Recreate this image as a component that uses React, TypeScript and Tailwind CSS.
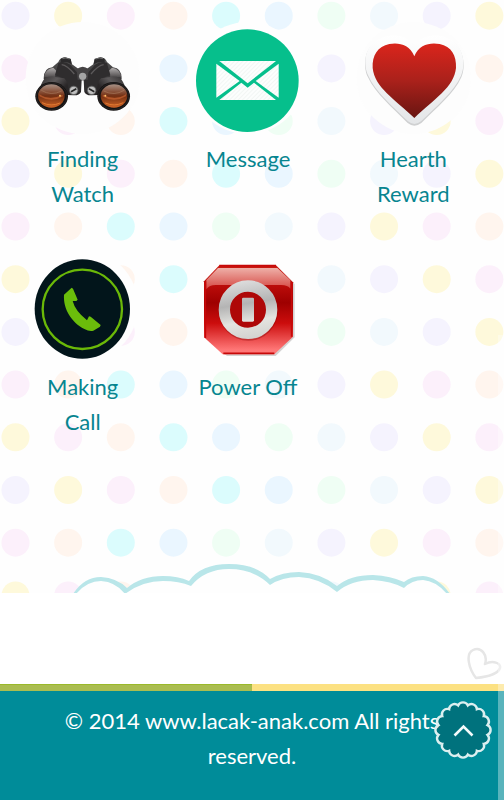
import React from "react";

const dotColors = ["#f5f3fe", "#fef9db", "#fcf0fb", "#fff5ee", "#dbfcfd", "#eaf6ff", "#effef4", "#f2f9fd"];
const rowStarts = [0, 2, 1];

function DotPattern() {
  const dots: React.ReactElement[] = [];
  for (let row = 0; row < 24; row++) {
    for (let col = 0; col < 40; col++) {
      dots.push(
        <circle
          key={`${row}-${col}`}
          cx={15.5 + col * 52.65}
          cy={15.7 + row * 52.7}
          r={14}
          fill={dotColors[(rowStarts[row % 3] + col) % 8]}
        />
      );
    }
  }
  return (
    <svg className="absolute inset-0 h-full w-full" aria-hidden="true">
      {dots}
    </svg>
  );
}

function Barrel() {
  return (
    <g>
      <path d="M132 236 Q132 204 158 202 L176 186 Q181 173 196 172 L213 176 L217 193 L236 206 L262 206 L262 240 L246 241 L244 276 Q238 287 222 286 L200 285 L150 262 Z" fill="url(#body)" />
      <path d="M133 232 Q136 206 161 203 L170 212 L166 232 Z" fill="url(#side)" />
      <path d="M176 190 Q192 181 212 194 L238 224 L244 246 L243 271 Q234 285 212 284 L204 252 L180 230 L166 226 Z" fill="#2f2d2e" />
      <path d="M186 194 Q202 196 224 222" fill="none" stroke="#5c595a" strokeWidth="4" />
      <path d="M183 177 Q196 168 213 178 L216 193 Q200 183 183 188 Z" fill="#2b2a2b" />
      <path d="M188 176 Q198 172 210 177" stroke="#8c8c8c" strokeWidth="2" fill="none" />
      <path d="M128 246 Q136 228 162 230 L194 235 Q207 248 206 275 L193 315 L170 328 L112 280 Z" fill="url(#barrel)" />
      <ellipse cx="156" cy="289" rx="49" ry="43" fill="#151313" />
      <ellipse cx="156" cy="289" rx="46" ry="40" fill="none" stroke="#4a4442" strokeWidth="1" />
      <ellipse cx="155" cy="288" rx="40" ry="35" fill="url(#lens)" />
      <path d="M119 283 Q151 304 188 284 L190 289 Q156 310 119 289 Z" fill="#d9703a" opacity=".55" />
      <path d="M125 271 Q154 289 186 273" fill="none" stroke="#a8785c" strokeWidth="2" />
      <path d="M127 308 Q155 321 181 309" fill="none" stroke="#e07a32" strokeWidth="3" />
      <circle cx="181" cy="287" r="3" fill="#ffc36b" />
      <circle cx="222" cy="271" r="14" fill="#666" />
      <circle cx="222" cy="271" r="11" fill="#c0c0c0" />
      <path d="M214 275 L230 266" stroke="#242424" strokeWidth="5" />
    </g>
  );
}

function Binoculars() {
  return (
    <svg viewBox="78 66 342 336" className="h-28 w-full" aria-hidden="true">
      <defs>
        <linearGradient id="body" x1="0" y1="0" x2="0" y2="1">
          <stop offset="0" stopColor="#555" />
          <stop offset=".5" stopColor="#3b393a" />
          <stop offset="1" stopColor="#252223" />
        </linearGradient>
        <linearGradient id="side" x1="0" y1="0" x2="0" y2="1">
          <stop offset="0" stopColor="#b4b0b0" />
          <stop offset="1" stopColor="#4d4a4b" />
        </linearGradient>
        <linearGradient id="barrel" x1="0" y1="0" x2="1" y2="1">
          <stop offset="0" stopColor="#2a2728" />
          <stop offset=".35" stopColor="#5d5a5b" />
          <stop offset=".6" stopColor="#2a2728" />
          <stop offset="1" stopColor="#1f1d1e" />
        </linearGradient>
        <linearGradient id="lens" x1="0" y1="0" x2="0" y2="1">
          <stop offset="0" stopColor="#a69085" />
          <stop offset=".32" stopColor="#885038" />
          <stop offset=".5" stopColor="#722f13" />
          <stop offset="1" stopColor="#d06425" />
        </linearGradient>
      </defs>
      <ellipse cx="249" cy="234" rx="171" ry="168" fill="#fdfdfd" />
      <Barrel />
      <g transform="translate(498 0) scale(-1 1)">
        <Barrel />
      </g>
      <path d="M231 208 Q249 193 267 208 L264 239 L234 239 Z" fill="#454344" />
      <circle cx="249" cy="229" r="11" fill="#a5a5a5" />
    </svg>
  );
}

function Envelope() {
  return (
    <svg viewBox="69 66 342 336" className="h-28 w-full" aria-hidden="true">
      <defs>
        <pattern id="stripes" width="9" height="9" patternUnits="userSpaceOnUse" patternTransform="rotate(45)">
          <rect width="9" height="9" fill="#fcfefd" />
          <rect width="2" height="9" fill="#edf3f0" />
        </pattern>
      </defs>
      <ellipse cx="240" cy="234" rx="171" ry="168" fill="#fefefe" />
      <circle cx="239" cy="242" r="154" fill="#06bf8c" />
      <g fill="url(#stripes)">
        <path d="M155 183 H325 L240 250 Z" />
        <path d="M146 191 L216 243 L146 293 Z" />
        <path d="M333 191 L264 243 L333 293 Z" />
        <path d="M155 300 L221 248 L240 263 L259 248 L325 300 Z" />
      </g>
    </svg>
  );
}

function HeartBadge() {
  return (
    <svg viewBox="60 66 342 336" className="h-28 w-full" aria-hidden="true">
      <defs>
        <linearGradient id="red" x1="0" y1="0" x2="0" y2="1">
          <stop offset="0" stopColor="#da251c" />
          <stop offset=".5" stopColor="#aa211b" />
          <stop offset="1" stopColor="#681511" />
        </linearGradient>
        <linearGradient id="rim" x1="0" y1="0" x2="0" y2="1">
          <stop offset="0" stopColor="#fff" />
          <stop offset="1" stopColor="#e4e6e8" />
        </linearGradient>
      </defs>
      <ellipse cx="231" cy="234" rx="171" ry="168" fill="#fdfdfd" />
      <path d="M233 137 C205 104 157 101 117 125 C83 147 78 198 94 232 C116 280 167 323 213 369 Q233 385 254 369 C300 323 353 280 374 232 C389 198 380 146 348 125 C308 101 262 104 233 137 Z" fill="#cfd0d1" />
      <path d="M233 134 C205 101 157 98 117 122 C84 143 79 193 95 227 C116 275 167 318 214 364 Q233 380 253 364 C300 318 352 275 373 227 C388 193 380 143 348 122 C308 98 262 101 233 134 Z" fill="url(#rim)" />
      <path d="M233 169 C219 133 186 127 158 132 C123 139 106 167 108 204 C114 263 174 297 233 354 C292 297 352 263 358 204 C360 167 344 139 309 132 C280 127 247 133 233 169 Z" fill="url(#red)" />
    </svg>
  );
}

function PhoneBadge() {
  return (
    <svg viewBox="78 90 342 336" className="h-28 w-full" aria-hidden="true">
      <ellipse cx="249" cy="258" rx="166" ry="168" fill="#fefefe" />
      <ellipse cx="248" cy="267" rx="143" ry="149" fill="#02151b" />
      <circle cx="248" cy="268" r="119" fill="none" stroke="#6bb908" strokeWidth="7" />
      <path d="M193 224 L216 203 L220 206 L234 239 L230 243 L219 243 Q226 272 262 301 L268 289 L273 290 L303 315 L301 320 L281 332 Q269 335 254 327 C216 307 190 267 193 224 Z" fill="#6bbd0b" />
    </svg>
  );
}

function PowerBadge() {
  return (
    <svg viewBox="69 90 342 336" className="h-28 w-full" aria-hidden="true">
      <defs>
        <linearGradient id="glass" x1="0" y1="0" x2="0" y2="1">
          <stop offset="0" stopColor="#c91a12" />
          <stop offset=".24" stopColor="#b90b09" />
          <stop offset=".42" stopColor="#9e0000" />
          <stop offset=".65" stopColor="#cc0d0d" />
          <stop offset=".95" stopColor="#ff7777" />
        </linearGradient>
        <linearGradient id="shine" x1="0" y1="0" x2="0" y2="1">
          <stop offset="0" stopColor="#eeb0a8" />
          <stop offset="1" stopColor="#d54742" />
        </linearGradient>
        <linearGradient id="metal" gradientUnits="userSpaceOnUse" x1="220" y1="180" x2="250" y2="358">
          <stop offset="0" stopColor="#dedede" />
          <stop offset=".4" stopColor="#b4b4b4" />
          <stop offset=".7" stopColor="#e4e4e0" />
          <stop offset="1" stopColor="#d2d2cf" />
        </linearGradient>
      </defs>
      <ellipse cx="240" cy="258" rx="171" ry="168" fill="#fefefe" />
      <path d="M157 140 H327 L381 192 V352 L324 408 H178 L145 382 Z" fill="#d4d2d2" />
      <path d="M155 136 H325 L376 187 V350 L320 403 H165 L109 352 V184 Z" fill="url(#glass)" />
      <path d="M151 144 H329 L368 180 V206 Q361 195 340 195 H145 Q124 195 116 208 V180 Z" fill="url(#shine)" />
      <path d="M113 354 V184 M155 137 H325 M372 187 V350 M167 400 H320" fill="none" stroke="#c70808" strokeWidth="5" />
      <circle cx="242" cy="273" r="89" fill="#850000" opacity=".35" />
      <circle cx="241" cy="269" r="71" fill="#ae0808" stroke="url(#metal)" strokeWidth="34" />
      <rect x="223" y="233" width="36" height="72" rx="4" fill="url(#metal)" />
    </svg>
  );
}

const features = [
  { label: "Finding Watch", Icon: Binoculars },
  { label: "Message", Icon: Envelope },
  { label: "Hearth Reward", Icon: HeartBadge },
  { label: "Making Call", Icon: PhoneBadge },
  { label: "Power Off", Icon: PowerBadge },
];

function Clouds() {
  return (
    <svg viewBox="0 560 504 33" className="block w-full" aria-hidden="true">
      <path d="M73 594 Q84 577 101 577 Q117 578 127 588 Q141 576 163 576 Q178 576 189 581 Q201 564 229 564 Q256 564 270 579 Q282 572 299 572 Q321 573 337 586 Q350 575 373 575 Q391 576 404 582 Q411 576 423 576 Q438 577 450 594 Z" fill="#b9e6e9" />
      <path d="M76 594 Q87 581 101 581 Q116 582 125 594 Q142 581 163 581 Q179 581 191 586 Q205 569 229 569 Q254 569 270 585 Q282 577 299 577 Q320 578 337 592 Q351 580 373 580 Q391 581 404 588 Q412 580 423 580 Q436 581 447 594 Z" fill="#fefefe" />
    </svg>
  );
}

function scallops() {
  const count = 16;
  const point = (i: number) => {
    const a = ((i - 0.5) / count) * Math.PI * 2 - Math.PI / 2;
    return `${30 + 25 * Math.cos(a)} ${30 + 25 * Math.sin(a)}`;
  };
  let d = `M${point(0)}`;
  for (let i = 1; i <= count; i++) d += ` A5.4 5.4 0 0 1 ${point(i)}`;
  return d + " Z";
}

export default function App() {
  return (
    <div className="relative bg-white font-[Lato,sans-serif] text-[22px] leading-[35px]">
      <main className="relative overflow-hidden bg-[#fefefe] pt-[22px]">
        <DotPattern />
        <nav className="relative grid grid-cols-3 pr-2" aria-label="Features">
          {features.map(({ label, Icon }) => (
            <a key={label} href="#" className="mb-[39px] block px-7 text-center text-[#078590]">
              <span className="-mx-7 mb-[7px] block">
                <Icon />
              </span>
              {label}
            </a>
          ))}
        </nav>
        <div className="relative pt-[82px]">
          <Clouds />
        </div>
      </main>

      <div className="flex h-[91px] items-end justify-end pr-[2px] pb-[3px]">
        <svg viewBox="0 0 36 34" className="h-[34px] w-9" aria-hidden="true">
          <path d="M10 31 C3 22 -1 7 7 3 C15 -1 22 8 19 17 C27 13 35 16 34 21 C32 27 20 30 10 31 Z" fill="none" stroke="#e6e6e6" strokeWidth="2.5" strokeLinejoin="round" />
        </svg>
      </div>

      <footer className="bg-[#008c99] text-center text-white">
        <div className="flex h-[7px]">
          <div className="flex-1 border-t border-[#9ab92a] bg-[#aabd50]" />
          <div className="flex-1 bg-[#fce182]" />
        </div>
        <p className="px-[50px] pt-3 pb-[27px]">© 2014 www.lacak-anak.com All rights reserved.</p>
      </footer>

      <button type="button" aria-label="Back to top" className="fixed right-[11px] bottom-10 size-[60px]">
        <svg viewBox="0 0 60 60" className="size-full" aria-hidden="true">
          <path d={scallops()} fill="#000" fillOpacity="0.18" stroke="#dceff0" strokeWidth="2.4" />
          <path d="M21.500 35.500 L30.500 26.500 L39.500 35.500" fill="none" stroke="#f4fbfb" strokeWidth="2.600" />
        </svg>
      </button>
      <div className="pointer-events-none fixed right-0 bottom-0 h-[465px] w-1.5 bg-white/35" />
    </div>
  );
}
